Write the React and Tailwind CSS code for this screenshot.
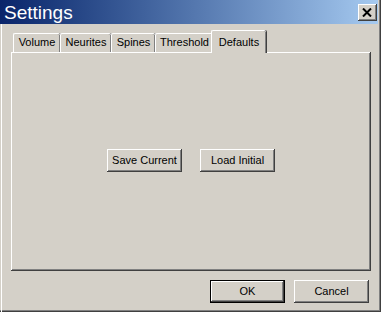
const raised =
  'shadow-[inset_-1px_-1px_0_#404040,inset_1px_1px_0_#ffffff,inset_-2px_-2px_0_#808080]'

function Tab({ label, width, active }) {
  if (active) {
    return (
      <div
        className={`relative z-10 -mb-[1px] -ml-[2px] h-[23px] ${width} flex items-start justify-center pt-[3px] bg-[#d4d0c8] rounded-t-[2px] border-t border-l border-white shadow-[inset_-1px_0_0_#808080,1px_0_0_#404040]`}
      >
        {label}
      </div>
    )
  }
  return (
    <div
      className={`h-[19px] ${width} flex items-center justify-center pb-[1px] rounded-t-[2px] border-t border-l border-white shadow-[inset_-1px_0_0_#808080,1px_0_0_#404040]`}
    >
      {label}
    </div>
  )
}

function Button({ children, isDefault }) {
  if (isDefault) {
    return (
      <div className="w-[75px] h-[23px] border border-black">
        <div className={`w-full h-full flex items-center justify-center ${raised}`}>{children}</div>
      </div>
    )
  }
  return (
    <div className={`w-[75px] h-[23px] flex items-center justify-center ${raised}`}>
      {children}
    </div>
  )
}

export default function App() {
  return (
    <div
      className="w-[381px] h-[312px] bg-[#d4d0c8] flex flex-col text-[11px] text-black shadow-[inset_-1px_-1px_0_#404040,inset_-2px_-2px_0_#808080] overflow-hidden"
      style={{ fontFamily: '"Liberation Sans", Arial, sans-serif' }}
    >
      {/* Title bar */}
      <div className="h-[24px] mr-[3px] flex items-center justify-between pl-[4px] pr-[1px] bg-gradient-to-r from-[#0a246a] to-[#a6caf0]">
        <span className="text-white text-[19px] leading-none">Settings</span>
        <div className={`w-[19px] h-[17px] bg-[#d4d0c8] flex items-center justify-center pr-[1px] ${raised}`}>
          <svg width="10" height="9" viewBox="0 0 10 9">
            <path d="M1 0.5L9 8.5M9 0.5L1 8.5" stroke="#000" strokeWidth="2" />
          </svg>
        </div>
      </div>

      {/* Body */}
      <div className="flex-1 ml-[1px] border-l border-white flex flex-col pl-[9px] pr-[9px] pt-[7px]">
        <div className="flex items-end h-[21px] pl-[2px]">
          <Tab label="Volume" width="w-[47px]" />
          <Tab label="Neurites" width="w-[51px]" />
          <Tab label="Spines" width="w-[44px]" />
          <Tab label="Threshold" width="w-[58px]" />
          <Tab label="Defaults" width="w-[55px]" active />
        </div>
        <div className={`h-[219px] w-[360px] flex items-center justify-center gap-[18px] pb-[3px] ${raised}`}>
          <Button>Save Current</Button>
          <Button>Load Initial</Button>
        </div>
        <div className="flex justify-end gap-[9px] mt-[9px] w-[360px] pr-[2px]">
          <Button isDefault>OK</Button>
          <Button>Cancel</Button>
        </div>
      </div>
    </div>
  )
}
